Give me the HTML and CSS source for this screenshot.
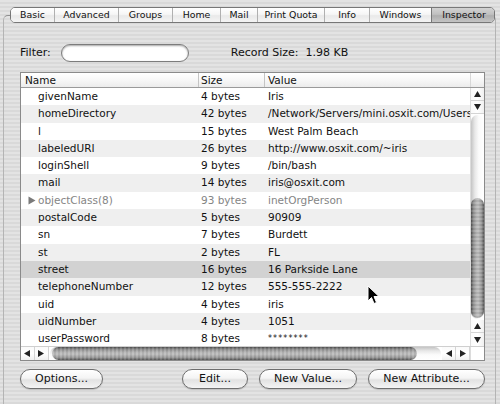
FILE: index.html
```html
<!DOCTYPE html>
<html>
<head>
<meta charset="utf-8">
<link rel="stylesheet" href="styles.css">
</head>
<body>
<div class="window">
  <div class="tabview">
    <div class="tabs">
      <div class="tab">Basic</div>
      <div class="tab">Advanced</div>
      <div class="tab">Groups</div>
      <div class="tab">Home</div>
      <div class="tab">Mail</div>
      <div class="tab">Print Quota</div>
      <div class="tab">Info</div>
      <div class="tab">Windows</div>
      <div class="tab selected">Inspector</div>
    </div>
    <div class="filter-row">
      <span class="label">Filter:</span>
      <div class="search"></div>
      <span class="label record">Record Size:&nbsp; 1.98 KB</span>
    </div>
    <div class="table">
      <div class="thead">
        <div class="th name">Name</div>
        <div class="th size">Size</div>
        <div class="th value">Value</div>
        <div class="th corner"></div>
      </div>
      <div class="tbody">
        <div class="rows">
          <div class="row"><div class="c name">givenName</div><div class="c size">4 bytes</div><div class="c value">Iris</div></div>
          <div class="row alt"><div class="c name">homeDirectory</div><div class="c size">42 bytes</div><div class="c value">/Network/Servers/mini.osxit.com/Users/iris</div></div>
          <div class="row"><div class="c name">l</div><div class="c size">15 bytes</div><div class="c value">West Palm Beach</div></div>
          <div class="row alt"><div class="c name">labeledURI</div><div class="c size">26 bytes</div><div class="c value">http://www.osxit.com/~iris</div></div>
          <div class="row"><div class="c name">loginShell</div><div class="c size">9 bytes</div><div class="c value">/bin/bash</div></div>
          <div class="row alt"><div class="c name">mail</div><div class="c size">14 bytes</div><div class="c value">iris@osxit.com</div></div>
          <div class="row dim"><div class="c name"><svg class="disclosure" width="8" height="9" viewBox="0 0 8 9"><polygon points="0.5,0.5 7.5,4.5 0.5,8.5" fill="#7a7a7a"/></svg>objectClass(8)</div><div class="c size">93 bytes</div><div class="c value">inetOrgPerson</div></div>
          <div class="row alt"><div class="c name">postalCode</div><div class="c size">5 bytes</div><div class="c value">90909</div></div>
          <div class="row"><div class="c name">sn</div><div class="c size">7 bytes</div><div class="c value">Burdett</div></div>
          <div class="row alt"><div class="c name">st</div><div class="c size">2 bytes</div><div class="c value">FL</div></div>
          <div class="row sel"><div class="c name">street</div><div class="c size">16 bytes</div><div class="c value">16 Parkside Lane</div></div>
          <div class="row alt"><div class="c name">telephoneNumber</div><div class="c size">12 bytes</div><div class="c value">555-555-2222</div></div>
          <div class="row"><div class="c name">uid</div><div class="c size">4 bytes</div><div class="c value">iris</div></div>
          <div class="row alt"><div class="c name">uidNumber</div><div class="c size">4 bytes</div><div class="c value">1051</div></div>
          <div class="row"><div class="c name">userPassword</div><div class="c size">8 bytes</div><div class="c value stars">********</div></div>
        </div>
        <div class="vscroll">
          <div class="arrow v"><svg width="7" height="6" viewBox="0 0 7 6"><polygon points="3.5,0 7,6 0,6" fill="#222"/></svg></div>
          <div class="arrow v"><svg width="7" height="6" viewBox="0 0 7 6"><polygon points="0,0 7,0 3.5,6" fill="#222"/></svg></div>
          <div class="vtrack"><div class="vthumb"></div></div>
          <div class="arrow v"><svg width="7" height="6" viewBox="0 0 7 6"><polygon points="3.5,0 7,6 0,6" fill="#222"/></svg></div>
          <div class="arrow v last"><svg width="7" height="6" viewBox="0 0 7 6"><polygon points="0,0 7,0 3.5,6" fill="#222"/></svg></div>
        </div>
      </div>
      <div class="hscroll">
        <div class="arrow h"><svg width="6" height="7" viewBox="0 0 6 7"><polygon points="0,3.5 6,0 6,7" fill="#222"/></svg></div>
        <div class="arrow h"><svg width="6" height="7" viewBox="0 0 6 7"><polygon points="0,0 6,3.5 0,7" fill="#222"/></svg></div>
        <div class="htrack"><div class="hthumb"></div></div>
        <div class="arrow h"><svg width="6" height="7" viewBox="0 0 6 7"><polygon points="0,3.5 6,0 6,7" fill="#222"/></svg></div>
        <div class="arrow h"><svg width="6" height="7" viewBox="0 0 6 7"><polygon points="0,0 6,3.5 0,7" fill="#222"/></svg></div>
        <div class="hcorner"></div>
      </div>
    </div>
    <div class="buttons">
      <div class="btn options">Options...</div>
      <div class="btn edit">Edit...</div>
      <div class="btn newvalue">New Value...</div>
      <div class="btn newattr">New Attribute...</div>
    </div>
  </div>
  <svg class="cursor" width="13" height="20" viewBox="0 0 13 20">
    <polygon points="1,1 1,16 4.5,12.5 7,18.5 9.5,17.5 7,11.5 12,11.5" fill="#000" stroke="#fff" stroke-width="1" stroke-linejoin="round"/>
  </svg>
</div>
</body>
</html>
```

FILE: styles.css
```css
* { box-sizing: border-box; }

html, body {
  margin: 0;
  padding: 0;
}

body {
  width: 500px;
  height: 404px;
  overflow: hidden;
  font-family: "DejaVu Sans", "Liberation Sans", sans-serif;
  color: #111;
  background: repeating-linear-gradient(to bottom, #e3e3e3 0px, #e3e3e3 2px, #d9d9d9 2px, #d9d9d9 4px);
}

.window {
  position: relative;
  width: 500px;
  height: 404px;
}

.tabview {
  margin: 15px 4px 0 3px;
  border-top: 1px solid #8e8e8e;
  border-left: 1px solid #b4b4b4;
  border-right: 1px solid #b4b4b4;
  border-radius: 5px 5px 0 0;
  height: 389px;
  padding-top: 0;
}

.tabs {
  display: grid;
  grid-template-columns: 43px 64px 54px 48px 37px 67px 45px 62px 65px;
  margin: -9px 0 0 6px;
  width: 485px;
  height: 16px;
  border: 1px solid #777;
  border-radius: 5px;
  overflow: hidden;
  background: #f2f2f2;
}

.tab {
  font-size: 9.4px;
  line-height: 14px;
  text-align: center;
  border-left: 1px solid #b0b0b0;
  background: linear-gradient(to bottom, #ffffff 0%, #f6f6f6 45%, #e9e9e9 55%, #f4f4f4 100%);
  white-space: nowrap;
}

.tab:first-child { border-left: none; }

.tab.selected {
  border-left: 1px solid #777;
  background: linear-gradient(to bottom, #d2d2d2 0%, #c0c0c0 45%, #aeaeae 55%, #c4c4c4 100%);
}

.filter-row {
  display: flex;
  align-items: center;
  height: 18px;
  margin-top: 21px;
  padding-left: 16px;
}

.label {
  font-size: 11px;
  line-height: 18px;
}

.search {
  width: 128px;
  height: 18px;
  margin-left: 10px;
  border: 1px solid #7c7c7c;
  border-radius: 9px;
  background: #fff;
  box-shadow: inset 0 1px 2px rgba(0,0,0,0.35);
}

.record {
  margin-left: 42px;
}

.table {
  margin: 10px 0 0 16px;
  width: 465px;
  height: 289px;
  border: 1px solid #8a8a8a;
  background: #fff;
  display: flex;
  flex-direction: column;
}

.thead {
  display: grid;
  grid-template-columns: 178px 66px 205px 14px;
  height: 15px;
  border-bottom: 1px solid #9a9a9a;
  background: linear-gradient(to bottom, #ffffff 0%, #f7f7f7 50%, #ececec 100%);
}

.th {
  font-size: 10.5px;
  line-height: 14px;
  border-right: 1px solid #c4c4c4;
  white-space: nowrap;
}

.th.name { padding-left: 4px; }
.th.size { padding-left: 2px; }
.th.value { padding-left: 3px; border-right: none; }
.th.corner { border-right: none; border-left: 1px solid #d8d8d8; }

.tbody {
  display: flex;
  height: 258px;
}

.rows {
  width: 449px;
  height: 258px;
  overflow: hidden;
}

.row {
  display: grid;
  grid-template-columns: 178px 66px 205px;
  height: 17.3px;
  background: #fff;
}

.row.alt { background: #efefef; }
.row.sel { background: #d2d2d2; }
.row.dim { color: #858585; }

.c {
  font-size: 10.5px;
  line-height: 17.3px;
  white-space: nowrap;
  overflow: hidden;
}

.c.name {
  padding-left: 17px;
  display: flex;
  align-items: center;
}

.disclosure {
  margin-left: -10px;
  margin-right: 2px;
}

.c.size { padding-left: 2px; }
.c.value { padding-left: 3px; }
.c.stars { font-size: 8px; letter-spacing: 1.1px; }

.vscroll {
  width: 14px;
  height: 258px;
  display: flex;
  flex-direction: column;
  background: #fff;
  border-left: 1px solid #dcdcdc;
}

.arrow {
  display: flex;
  align-items: center;
  justify-content: center;
  background: linear-gradient(to right, #fafafa, #ffffff 50%, #f0f0f0);
}

.arrow.v {
  height: 13px;
  border-bottom: 1px solid #d4d4d4;
}

.arrow.v.last { border-bottom: none; }

.vtrack {
  flex: 1;
  margin: 1px 0 1px 0;
  padding-top: 83px;
  border-radius: 7px;
  background: linear-gradient(to right, #c4c4c4 0%, #e8e8e8 30%, #fbfbfb 60%, #ffffff 100%);
}

.vthumb {
  height: 120px;
  border-radius: 7px;
  background:
    repeating-linear-gradient(to bottom, rgba(255,255,255,0.10) 0px, rgba(255,255,255,0.10) 2px, rgba(0,0,0,0.05) 2px, rgba(0,0,0,0.05) 4px),
    linear-gradient(to right, #4e4e4e 0%, #8e8e8e 18%, #b4b4b4 40%, #bebebe 55%, #9a9a9a 80%, #555 100%);
}

.hscroll {
  display: flex;
  height: 14px;
  border-top: 1px solid #cfcfcf;
  background: #fff;
}

.arrow.h {
  width: 14px;
  border-right: 1px solid #d4d4d4;
  background: linear-gradient(to bottom, #fafafa, #ffffff 50%, #f0f0f0);
}

.htrack {
  width: 393px;
  margin: 0 1px;
  padding-left: 2px;
  border-radius: 7px;
  background: linear-gradient(to bottom, #c4c4c4 0%, #e8e8e8 30%, #fbfbfb 60%, #ffffff 100%);
}

.hthumb {
  width: 365px;
  height: 13px;
  border-radius: 7px;
  background:
    repeating-linear-gradient(to right, rgba(255,255,255,0.10) 0px, rgba(255,255,255,0.10) 2px, rgba(0,0,0,0.05) 2px, rgba(0,0,0,0.05) 4px),
    linear-gradient(to bottom, #4e4e4e 0%, #8e8e8e 18%, #b4b4b4 40%, #bebebe 55%, #9a9a9a 80%, #555 100%);
}

.hcorner {
  width: 14px;
  background: #fff;
  border-left: 1px solid #dcdcdc;
}

.buttons {
  display: flex;
  margin: 8px 0 0 16px;
  width: 465px;
  height: 20px;
}

.btn {
  height: 20px;
  font-size: 11px;
  line-height: 18px;
  text-align: center;
  border: 1px solid #6e6e6e;
  border-radius: 10px;
  background: linear-gradient(to bottom, #ffffff 0%, #f4f4f4 45%, #e2e2e2 55%, #f4f4f4 100%);
  box-shadow: 0 1px 1px rgba(0,0,0,0.15);
  white-space: nowrap;
}

.btn.options { width: 83px; }
.btn.edit { width: 66px; margin-left: auto; }
.btn.newvalue { width: 98px; margin-left: 11px; }
.btn.newattr { width: 117px; margin-left: 11px; }

.cursor {
  position: absolute;
  left: 367px;
  top: 270px;
}
```
